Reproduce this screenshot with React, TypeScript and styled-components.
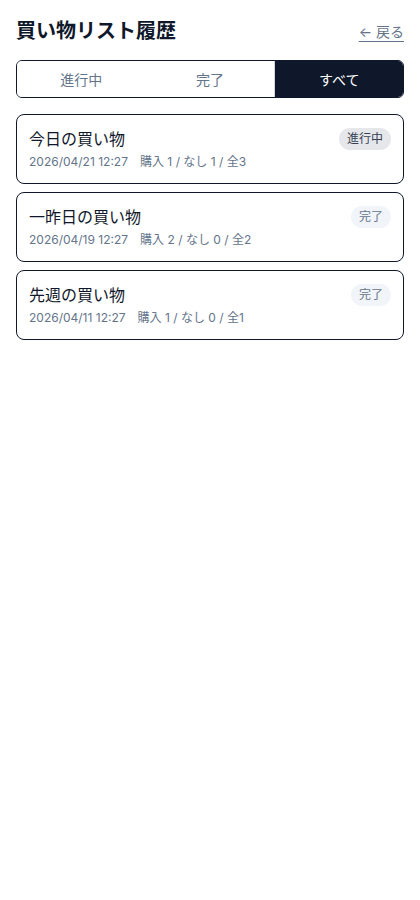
import React from "react";
import styled, { createGlobalStyle } from "styled-components";

const Global = createGlobalStyle`
  html, body { margin: 0; padding: 0; background: #ffffff; }
  body {
    font-family: Inter, "Noto Sans CJK JP", "Noto Sans", sans-serif;
    color: #0f172a;
  }
  * { box-sizing: border-box; }
`;

const Page = styled.div`
  padding: 16px;
  display: flex;
  flex-direction: column;
`;

const Header = styled.div`
  display: flex;
  align-items: center;
  justify-content: space-between;
  height: 30px;
  margin-bottom: 14px;
`;

const Title = styled.h1`
  margin: 0;
  font-size: 20px;
  line-height: 30px;
  font-weight: 700;
  color: #0f172a;
`;

const BackLink = styled.a`
  font-size: 14px;
  line-height: 20px;
  color: #64748b;
  text-decoration: underline;
  text-underline-offset: 4px;
  text-decoration-color: #64748b;
  cursor: pointer;
  margin-top: 2px;
`;

const Tabs = styled.div`
  display: grid;
  grid-template-columns: repeat(3, 1fr);
  border: 1px solid #0f172a;
  border-radius: 6px;
  overflow: hidden;
  margin-bottom: 16px;
`;

const Tab = styled.button<{ $active?: boolean }>`
  height: 36px;
  border: none;
  border-left: ${(p) => (p.$active ? "1px solid #d1d5db" : "none")};
  background: ${(p) => (p.$active ? "#0f172a" : "#ffffff")};
  color: ${(p) => (p.$active ? "#ffffff" : "#64748b")};
  font-family: inherit;
  font-size: 14px;
  padding: 0;
  cursor: pointer;
`;

const List = styled.div`
  display: flex;
  flex-direction: column;
  gap: 8px;
`;

const Card = styled.div`
  border: 1px solid #0f172a;
  border-radius: 8px;
  padding: 12px;
  display: flex;
  flex-direction: column;
  gap: 2px;
`;

const CardTop = styled.div`
  display: flex;
  align-items: center;
  justify-content: space-between;
`;

const CardTitle = styled.div`
  font-size: 16px;
  line-height: 24px;
  color: #0f172a;
`;

const Badge = styled.span<{ $status: "active" | "done" }>`
  font-size: 12px;
  line-height: 18px;
  padding: 2px 8px;
  border-radius: 999px;
  background: ${(p) => (p.$status === "active" ? "#e5e7eb" : "#f1f5f9")};
  color: ${(p) => (p.$status === "active" ? "#374151" : "#64748b")};
  margin-right: 0;
`;

const Meta = styled.div`
  display: flex;
  gap: 12px;
  font-size: 12px;
  line-height: 18px;
  color: #64748b;
`;

type Item = {
  title: string;
  date: string;
  bought: number;
  none: number;
  total: number;
  status: "active" | "done";
};

const items: Item[] = [
  { title: "今日の買い物", date: "2026/04/21 12:27", bought: 1, none: 1, total: 3, status: "active" },
  { title: "一昨日の買い物", date: "2026/04/19 12:27", bought: 2, none: 0, total: 2, status: "done" },
  { title: "先週の買い物", date: "2026/04/11 12:27", bought: 1, none: 0, total: 1, status: "done" },
];

export default function App() {
  return (
    <>
      <Global />
      <Page>
        <Header>
          <Title>買い物リスト履歴</Title>
          <BackLink>← 戻る</BackLink>
        </Header>
        <Tabs>
          <Tab>進行中</Tab>
          <Tab>完了</Tab>
          <Tab $active>すべて</Tab>
        </Tabs>
        <List>
          {items.map((it) => (
            <Card key={it.title}>
              <CardTop>
                <CardTitle>{it.title}</CardTitle>
                <Badge $status={it.status}>{it.status === "active" ? "進行中" : "完了"}</Badge>
              </CardTop>
              <Meta>
                <span>{it.date}</span>
                <span>
                  購入 {it.bought} / なし {it.none} / 全{it.total}
                </span>
              </Meta>
            </Card>
          ))}
        </List>
      </Page>
    </>
  );
}
